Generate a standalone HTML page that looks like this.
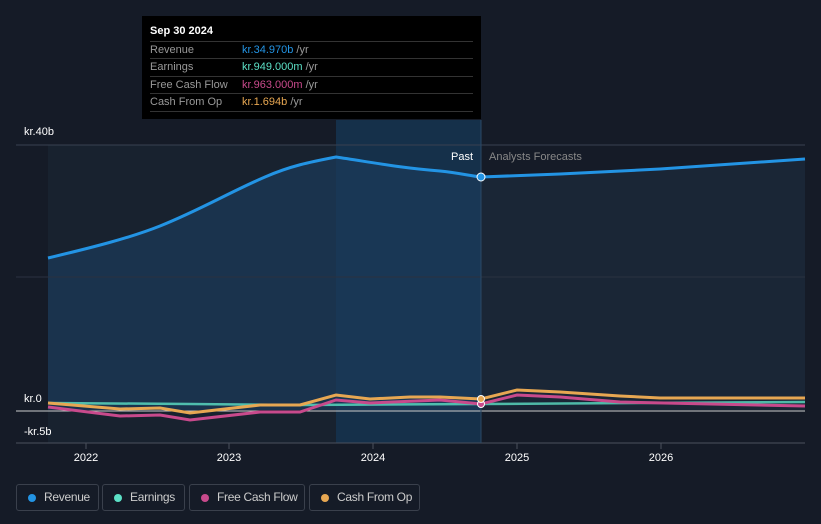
<!DOCTYPE html>
<html><head><meta charset="utf-8"><style>
html,body{margin:0;width:821px;height:524px;overflow:hidden}
body{background:#151b27;font-family:"Liberation Sans",sans-serif;position:relative}
.tt{position:absolute;left:142px;top:16px;width:339px;height:103px;background:#000;color:#fff;font-size:11px}
.tt .h{position:absolute;left:8px;top:9px;font-weight:bold;font-size:11px}
.row{position:absolute;left:8px;width:323px;height:17px;border-top:1px solid #333;line-height:17px;color:#999}
.row span{position:absolute;left:92px}
.leg{position:absolute;top:484px;height:27px;border:1px solid #3a404c;border-radius:3px;color:#ccc;font-size:12px;line-height:25px;box-sizing:border-box;white-space:nowrap;letter-spacing:-0.3px}
.leg i{position:absolute;left:11px;top:9px;width:8px;height:8px;border-radius:50%}
.leg b{font-weight:normal;position:absolute;left:27px}
.lbl{position:absolute;font-size:11px;color:#fff}
</style></head><body>
<svg width="821" height="524" style="position:absolute;left:0;top:0">
<rect x="48" y="145" width="433" height="298" fill="#18222f"/>
<rect x="336" y="120" width="145" height="323" fill="#15304a"/>
<path d="M48,258 C90,248 130,238 160,226 C200,210 230,192 265,177 C290,166 310,162 336,157 C370,162 400,168 440,171 C460,173 470,176 481,177 L481,410 L48,410Z" fill="#1b3b5a" opacity="0.7"/>
<path d="M481,177 L560,174 L660,169 L805,159 L805,410 L481,410Z" fill="#1a2636"/>
<line x1="16" y1="145" x2="805" y2="145" stroke="#394150"/>
<line x1="16" y1="277" x2="805" y2="277" stroke="#2a3240"/>
<line x1="16" y1="443" x2="805" y2="443" stroke="#4a505c"/>
<line x1="16" y1="411" x2="805" y2="411" stroke="#cccccc"/>
<line x1="481" y1="120" x2="481" y2="443" stroke="#2a4866"/>
<g stroke="#4a505c"><line x1="86" y1="443" x2="86" y2="449"/><line x1="229" y1="443" x2="229" y2="449"/><line x1="373" y1="443" x2="373" y2="449"/><line x1="517" y1="443" x2="517" y2="449"/><line x1="661" y1="443" x2="661" y2="449"/></g>
<path d="M48,258 C90,248 130,238 160,226 C200,210 230,192 265,177 C290,166 310,162 336,157 C370,162 400,168 440,171 C460,173 470,176 481,177 L560,174 L660,169 L805,159" fill="none" stroke="#2394e4" stroke-width="3"/>
<path d="M48,403 L190,404 L300,405 L481,404 L805,402" fill="none" stroke="#5ce0c6" stroke-width="2.5" opacity="0.8"/>
<path d="M48,407 L120,416 L160,415 L190,420 L260,412 L300,412 L336,400 L370,403 L440,400 L481,404 L517,395 L560,397 L620,402 L805,406" fill="none" stroke="#c84a8c" stroke-width="3"/>
<path d="M48,403 L120,409 L160,408 L190,413 L260,405 L300,405 L336,395 L370,399 L410,397 L440,397 L481,399 L517,390 L560,392 L620,396 L660,398 L805,398" fill="none" stroke="#e7a752" stroke-width="3"/>
<circle cx="481" cy="177" r="4" fill="#2394e4" stroke="#fff" stroke-width="1"/>
<circle cx="481" cy="404" r="3.5" fill="#c84a8c" stroke="#fff" stroke-width="1"/>
<circle cx="481" cy="399" r="3.5" fill="#e7a752" stroke="#fff" stroke-width="1"/>
<g fill="#fff" font-size="11" font-family="Liberation Sans" text-anchor="middle">
<text x="86" y="461">2022</text><text x="229" y="461">2023</text><text x="373" y="461">2024</text><text x="517" y="461">2025</text><text x="661" y="461">2026</text>
</g>
<text x="473" y="160" fill="#fff" font-size="11" text-anchor="end" font-family="Liberation Sans">Past</text>
<text x="489" y="160" fill="#888" font-size="11" font-family="Liberation Sans">Analysts Forecasts</text>
</svg>
<div class="lbl" style="left:24px;top:126px">kr.40b</div>
<div class="lbl" style="left:24px;top:393px">kr.0</div>
<div class="lbl" style="left:24px;top:426px">-kr.5b</div>
<div class="tt"><div class="h">Sep 30 2024</div>
<div class="row" style="top:25px">Revenue<span><em style="color:#2394e4;font-style:normal">kr.34.970b</em> /yr</span></div>
<div class="row" style="top:42px">Earnings<span><em style="color:#5ce0c6;font-style:normal">kr.949.000m</em> /yr</span></div>
<div class="row" style="top:60px">Free Cash Flow<span><em style="color:#c84a8c;font-style:normal">kr.963.000m</em> /yr</span></div>
<div class="row" style="top:77px;border-bottom:1px solid #333">Cash From Op<span><em style="color:#e7a752;font-style:normal">kr.1.694b</em> /yr</span></div>
</div>
<div class="leg" style="left:16px;width:83px"><i style="background:#2394e4"></i><b>Revenue</b></div>
<div class="leg" style="left:102px;width:83px"><i style="background:#5ce0c6"></i><b>Earnings</b></div>
<div class="leg" style="left:189px;width:116px"><i style="background:#c84a8c"></i><b>Free Cash Flow</b></div>
<div class="leg" style="left:309px;width:111px"><i style="background:#e7a752"></i><b>Cash From Op</b></div>
</body></html>
